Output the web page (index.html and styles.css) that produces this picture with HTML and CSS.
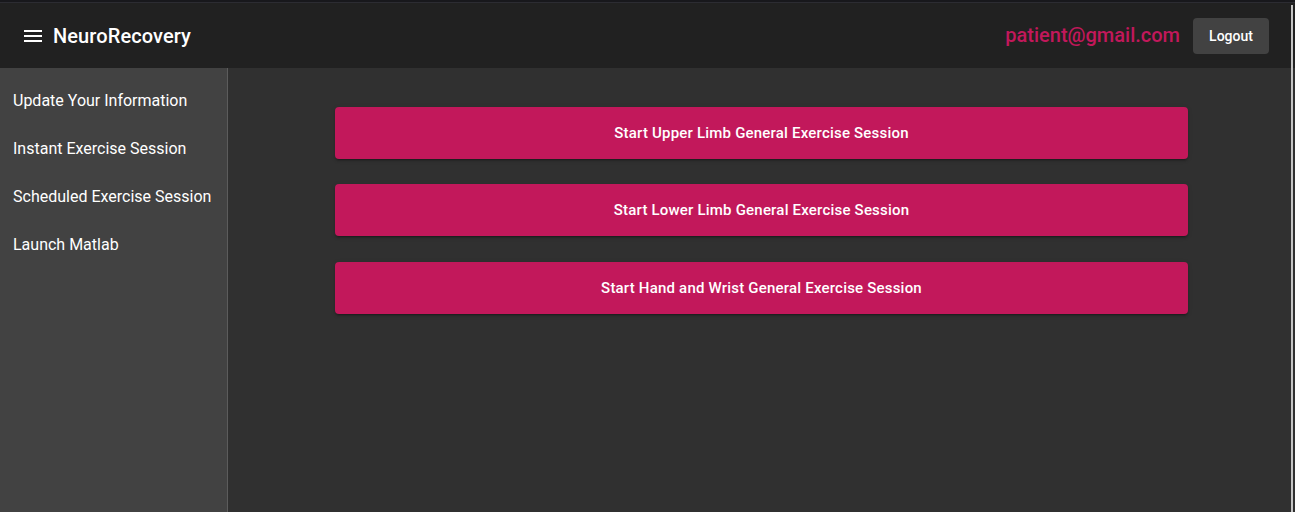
FILE: index.html
```html
<!DOCTYPE html>
<html>
<head>
<meta charset="utf-8">
<link rel="stylesheet" href="styles.css">
</head>
<body>
<div class="topstrip"></div>
<header class="appbar">
  <div class="brand">
    <svg class="menu-icon" width="18" height="12" viewBox="0 0 18 12"><rect x="0" y="0" width="18" height="2" fill="#fff"/><rect x="0" y="5" width="18" height="2" fill="#fff"/><rect x="0" y="10" width="18" height="2" fill="#fff"/></svg>
    <span class="title">NeuroRecovery</span>
  </div>
  <div class="actions">
    <span class="email">patient@gmail.com</span>
    <button class="logout">Logout</button>
  </div>
</header>
<div class="layout">
  <nav class="sidebar">
    <div class="nav-item">Update Your Information</div>
    <div class="nav-item">Instant Exercise Session</div>
    <div class="nav-item">Scheduled Exercise Session</div>
    <div class="nav-item">Launch Matlab</div>
  </nav>
  <main class="content">
    <button class="session-btn">Start Upper Limb General Exercise Session</button>
    <button class="session-btn">Start Lower Limb General Exercise Session</button>
    <button class="session-btn">Start Hand and Wrist General Exercise Session</button>
  </main>
</div>
<div class="scrollbar"></div>
</body>
</html>
```
FILE: styles.css
```css
* { box-sizing: border-box; }
html, body { margin: 0; padding: 0; height: 100%; overflow: hidden; }
body {
  font-family: Roboto, "Liberation Sans", sans-serif;
  background: #303030;
  color: #fff;
  display: flex;
  flex-direction: column;
}
.topstrip {
  height: 3px;
  background: #18181c;
  border-bottom: 1px solid #2c2c32;
  flex: none;
}
.appbar {
  height: 65px;
  flex: none;
  background: #212121;
  display: flex;
  align-items: center;
  justify-content: space-between;
  padding: 0 26px 0 24px;
}
.brand { display: flex; align-items: center; }
.menu-icon { margin-right: 11px; margin-top: 1px; }
.title { font-size: 20px; font-weight: 500; letter-spacing: 0.1px; }
.actions { display: flex; align-items: center; }
.email { color: #c2185b; font-size: 20px; font-weight: 500; margin-right: 13px; margin-top: -2px; }
.logout {
  background: #424242;
  color: #fff;
  border: none;
  border-radius: 4px;
  font-family: Roboto, "Liberation Sans", sans-serif;
  font-size: 14px;
  font-weight: 500;
  width: 76px;
  height: 36px;
  padding: 0;
  margin-top: 1px;
}
.layout { flex: 1; display: flex; min-height: 0; }
.sidebar {
  width: 228px;
  flex: none;
  background: #424242;
  border-right: 1px solid #5c5c5c;
  padding-top: 8px;
}
.nav-item {
  height: 48px;
  display: flex;
  align-items: center;
  padding-left: 13px;
  font-size: 16px;
  color: #fff;
}
.content {
  flex: 1;
  display: flex;
  flex-direction: column;
  align-items: center;
  padding-top: 39px;
  gap: 25px;
}
.session-btn {
  width: 80%;
  height: 52px;
  background: #c2185b;
  color: #fff;
  border: none;
  border-radius: 4px;
  font-family: Roboto, "Liberation Sans", sans-serif;
  font-size: 15px;
  font-weight: 500;
  letter-spacing: 0.2px;
  box-shadow: 0 3px 1px -2px rgba(0,0,0,.2), 0 2px 2px 0 rgba(0,0,0,.14), 0 1px 5px 0 rgba(0,0,0,.12);
  padding: 0;
  flex: none;
}
.session-btn:last-child { margin-top: 1px; }
.scrollbar {
  position: absolute;
  right: 2px;
  top: 5px;
  bottom: 0;
  width: 2px;
  background: #c4c4c4;
}
```
